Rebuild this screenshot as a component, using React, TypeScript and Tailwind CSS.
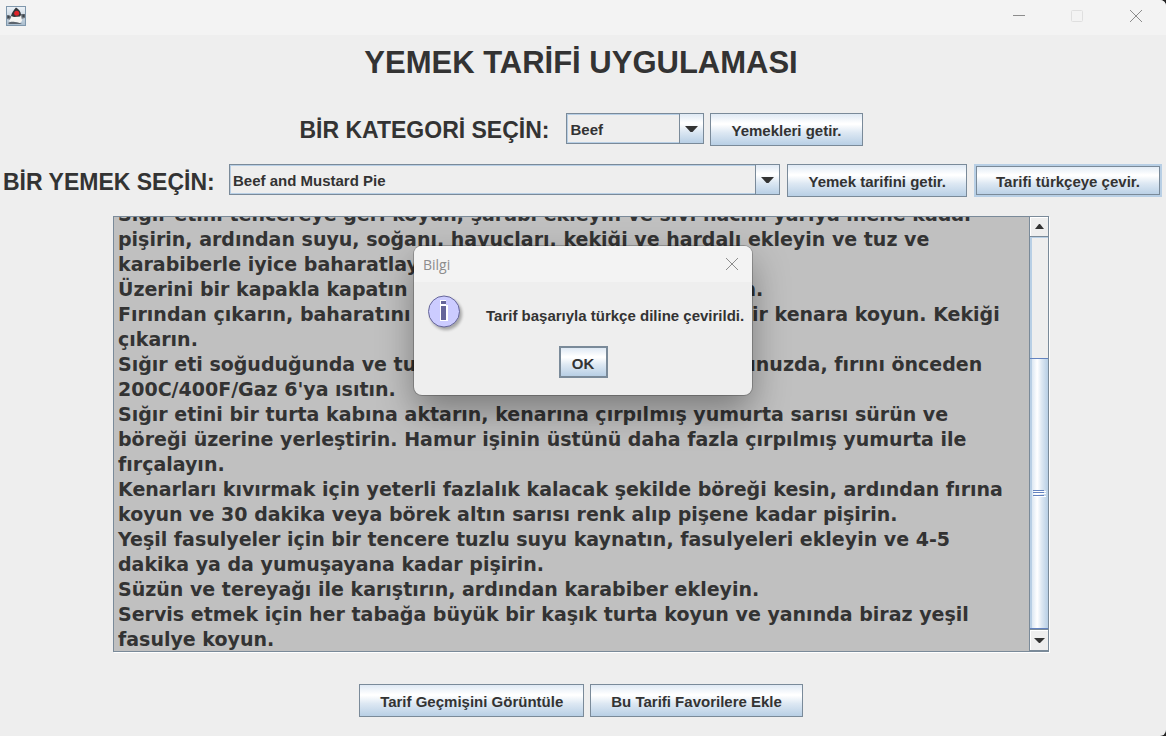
import { useLayoutEffect, useRef } from "react";
import type { ReactNode } from "react";

const RECIPE = [
  "Sığır etini tencereye geri koyun, şarabı ekleyin ve sıvı hacmi yarıya inene kadar",
  "pişirin, ardından suyu, soğanı, havuçları, kekiği ve hardalı ekleyin ve tuz ve",
  "karabiberle iyice baharatlayın.",
  "Üzerini bir kapakla kapatın ve iki saat boyunca fırına koyun.",
  "Fırından çıkarın, baharatını kontrol edin ve soğuması için bir kenara koyun. Kekiği",
  "çıkarın.",
  "Sığır eti soğuduğunda ve turtayı birleştirmeye hazır olduğunuzda, fırını önceden",
  "200C/400F/Gaz 6'ya ısıtın.",
  "Sığır etini bir turta kabına aktarın, kenarına çırpılmış yumurta sarısı sürün ve",
  "böreği üzerine yerleştirin. Hamur işinin üstünü daha fazla çırpılmış yumurta ile",
  "fırçalayın.",
  "Kenarları kıvırmak için yeterli fazlalık kalacak şekilde böreği kesin, ardından fırına",
  "koyun ve 30 dakika veya börek altın sarısı renk alıp pişene kadar pişirin.",
  "Yeşil fasulyeler için bir tencere tuzlu suyu kaynatın, fasulyeleri ekleyin ve 4-5",
  "dakika ya da yumuşayana kadar pişirin.",
  "Süzün ve tereyağı ile karıştırın, ardından karabiber ekleyin.",
  "Servis etmek için her tabağa büyük bir kaşık turta koyun ve yanında biraz yeşil",
  "fasulye koyun.",
].join("\n");

const INITIAL_SCROLL = 15;

const METAL = "bg-[linear-gradient(to_bottom,#dfe9f4_0%,#ffffff_30%,#ffffff_34%,#dde8f3_60%,#b8cfe5_100%)]";

function MetalButton({ children, focused = false }: { children: ReactNode; focused?: boolean }) {
  return (
    <button
      type="button"
      className={`h-[33px] shrink-0 whitespace-nowrap px-5 pt-[2px] text-[15px] font-bold leading-[18px] ${METAL} ${
        focused
          ? "border-2 border-[#b8cfe5] shadow-[inset_0_0_0_1px_#7a8a99]"
          : "border border-[#7a8a99]"
      }`}
    >
      {children}
    </button>
  );
}

function Combo({ id, value, className }: { id: string; value: string; className: string }) {
  return (
    <div className={`relative flex h-[31px] border border-[#7a8a99] ${className}`}>
      <select
        id={id}
        defaultValue={value}
        className="h-full w-full appearance-none border border-[#b8cfe5] bg-[#eeeeee] pl-[2px] pr-[26px] pt-[3px] text-[15px] font-bold outline-none"
      >
        <option>{value}</option>
      </select>
      <span className={`pointer-events-none absolute inset-y-0 right-0 flex w-6 items-center justify-center border-l border-[#7a8a99] ${METAL}`}>
        <svg width="13" height="6" viewBox="0 0 13 6" fill="#333">
          <path d="M0 0h13L7.5 6h-2z" />
        </svg>
      </span>
    </div>
  );
}

function CloseIcon() {
  return (
    <svg width="12" height="12" viewBox="0 0 12 12" stroke="#8c8c8c" fill="none">
      <path d="M0 0l12 12M12 0L0 12" />
    </svg>
  );
}

function JavaIcon() {
  return (
    <svg width="20" height="20" viewBox="0 0 20 20">
      <defs>
        <linearGradient id="tile" x1="0" y1="0" x2="0" y2="1">
          <stop offset="0" stopColor="#eef3f8" />
          <stop offset="1" stopColor="#a9bccd" />
        </linearGradient>
      </defs>
      <rect x="0.5" y="0.5" width="19" height="19" fill="url(#tile)" stroke="#7f97ac" />
      <path d="M5 10L1 9v4l4 1zM15 8l4 0v4l-4 1z" fill="#6f767e" />
      <path d="M6 10l9-1 1 6-2 2H5l-2-2z" fill="#f4f4f2" />
      <path d="M10 1.5C8 4 6 6 5 10l3 1 6-.5 1-1.5c0-3-2-6-5-7.5z" fill="#33363b" />
      <path d="M1.5 9.5h2v2.5h-2zM16.5 8.5h2v2.5h-2z" fill="#3d444c" />
      <circle cx="10.7" cy="7.3" r="2.5" fill="#e0242a" />
      <path d="M2 17c2-1.5 5-1.5 7-1 3 .5 5 .5 7 2H3z" fill="#5c646d" />
    </svg>
  );
}

function InfoIcon() {
  return (
    <svg width="38" height="40" viewBox="0 0 38 40">
      <defs>
        <filter id="soft" x="-20%" y="-20%" width="150%" height="150%">
          <feGaussianBlur stdDeviation="1.6" />
        </filter>
      </defs>
      <circle cx="18" cy="20" r="16" fill="#000" opacity="0.3" filter="url(#soft)" />
      <circle cx="16" cy="17.5" r="15.5" fill="#ccccff" stroke="#666699" />
      <path d="M12 6h8v21h-8z" fill="#fff" />
      <path d="M13 7h5v3h-5zM13 12h5v14h-5z" fill="#666699" />
      <path d="M18 6h2v5h-2z" fill="#ccccff" />
    </svg>
  );
}

function ScrollBar() {
  return (
    <div className="flex w-[19px] shrink-0 flex-col border-l border-[#7a8a99] bg-[#eeeeee]">
      <button type="button" aria-label="Yukarı kaydır" className="flex h-5 shrink-0 items-center justify-center border-b border-[#7a8a99] shadow-[inset_1px_1px_0_#fff]">
        <svg width="9" height="5" viewBox="0 0 9 5" fill="#333"><path d="M4 0h1l4 5H0z" /></svg>
      </button>
      <div className="flex flex-1 flex-col border-l-2 border-t border-[#b8cfe5] pt-[120px]">
        <div className="-ml-[2px] flex flex-1 items-center justify-center border-y border-[#6382bf] bg-[linear-gradient(to_right,#b8cfe5_0%,#b8cfe5_10%,#dde8f3_12%,#ffffff_40%,#dde8f3_65%,#b8cfe5_100%)]">
          <svg width="13" height="7" viewBox="0 0 13 7">
            <path d="M1 1.5h12M1 3.5h12M1 6.5h12" stroke="#fff" />
            <path d="M0 .5h11M0 2.5h11M0 5.5h11" stroke="#6382bf" />
          </svg>
        </div>
      </div>
      <button type="button" aria-label="Aşağı kaydır" className="flex h-[22px] shrink-0 items-center justify-center border-y border-[#7a8a99] shadow-[inset_1px_1px_0_#fff]">
        <svg width="11" height="5" viewBox="0 0 11 5" fill="#333"><path d="M0 0h11L6 5H5z" /></svg>
      </button>
    </div>
  );
}

export default function App() {
  const recipe = useRef<HTMLTextAreaElement>(null);

  useLayoutEffect(() => {
    if (recipe.current) recipe.current.scrollTop = INITIAL_SCROLL;
  }, []);

  return (
    <div className="min-h-screen bg-[#222222] font-['Liberation_Sans',Arial,sans-serif] text-[#333333]">
      <div className="relative flex min-h-screen flex-col overflow-hidden rounded-r-md bg-[#eeeeee]">
        <header className="flex h-[35px] items-center justify-between bg-[#f3f3f3] pb-[3px] pl-[6px]">
          <JavaIcon />
          <div className="flex">
            <button type="button" aria-label="Simge durumuna küçült" className="flex h-8 w-[58px] items-center justify-center">
              <svg width="12" height="12" viewBox="0 0 12 12"><path d="M0 5.5h12" stroke="#8c8c8c" /></svg>
            </button>
            <button type="button" aria-label="Ekranı kapla" disabled className="flex h-8 w-[58px] items-center justify-center">
              <svg width="12" height="12" viewBox="0 0 12 12"><rect x=".5" y=".5" width="11" height="11" rx="1" fill="none" stroke="#dfdfdf" /></svg>
            </button>
            <button type="button" aria-label="Kapat" className="flex h-8 w-[60px] items-center justify-center">
              <CloseIcon />
            </button>
          </div>
        </header>

        <main className="flex flex-col pr-1">
          <h1 className="pt-[10px] text-center text-[31px] font-bold leading-9">YEMEK TARİFİ UYGULAMASI</h1>

          <div className="mt-8 flex h-[33px] items-start justify-center">
            <label htmlFor="kategori" className="w-[267px] whitespace-nowrap text-[23px] font-bold leading-[34px]">BİR KATEGORİ SEÇİN:</label>
            <Combo id="kategori" value="Beef" className="mr-[6px] w-[138px]" />
            <MetalButton>Yemekleri getir.</MetalButton>
          </div>

          <div className="mt-[18px] flex h-[33px] items-start pl-[3px]">
            <label htmlFor="yemek" className="w-[226px] shrink-0 whitespace-nowrap text-[23px] font-bold leading-[36px]">BİR YEMEK SEÇİN:</label>
            <Combo id="yemek" value="Beef and Mustard Pie" className="min-w-0 flex-1" />
            <div className="ml-[7px] flex gap-[7px]">
              <MetalButton>Yemek tarifini getir.</MetalButton>
              <MetalButton focused>Tarifi türkçeye çevir.</MetalButton>
            </div>
          </div>

          <div className="mx-[113px] mt-[19px] flex border border-[#7a8a99] shadow-[1px_1px_0_#fff]">
            <textarea
              ref={recipe}
              aria-label="Tarif"
              readOnly
              wrap="off"
              defaultValue={RECIPE}
              className="block h-[434px] min-w-0 flex-1 resize-none overflow-hidden bg-[#c0c0c0] pl-[4px] font-['DejaVu_Sans',Verdana,sans-serif] text-[19px] font-bold leading-[25px] outline-none"
            />
            <ScrollBar />
          </div>

          <div className="mt-8 flex justify-center gap-[6px] pb-[19px]">
            <MetalButton>Tarif Geçmişini Görüntüle</MetalButton>
            <MetalButton>Bu Tarifi Favorilere Ekle</MetalButton>
          </div>
        </main>

        <section
          role="dialog"
          aria-labelledby="bilgi"
          className="absolute inset-x-0 top-[246px] mx-auto w-[338px] overflow-hidden rounded-lg bg-[#eeeeee] pb-[17px] shadow-[0_0_0_1px_rgba(0,0,0,0.22),0_16px_36px_rgba(0,0,0,0.36)]"
        >
          <header className="flex h-9 items-center justify-between bg-[#f3f3f3] pl-[9px] pr-[14px]">
            <h2 id="bilgi" className="font-['Open_Sans',sans-serif] text-[14px] text-[#8c8c8c]">Bilgi</h2>
            <button type="button" aria-label="Kapat"><CloseIcon /></button>
          </header>
          <div className="flex h-16 items-start pl-[14px] pt-[12px]">
            <InfoIcon />
            <p className="ml-5 whitespace-nowrap pt-[13px] text-[15px] font-bold leading-[18px]">Tarif başarıyla türkçe diline çevirildi.</p>
          </div>
          <div className="flex justify-center">
            <button type="button" className={`h-8 w-[49px] border-2 border-[#7a8a99] pt-[3px] text-[15px] font-bold leading-[18px] ${METAL}`}>OK</button>
          </div>
        </section>
      </div>
    </div>
  );
}
